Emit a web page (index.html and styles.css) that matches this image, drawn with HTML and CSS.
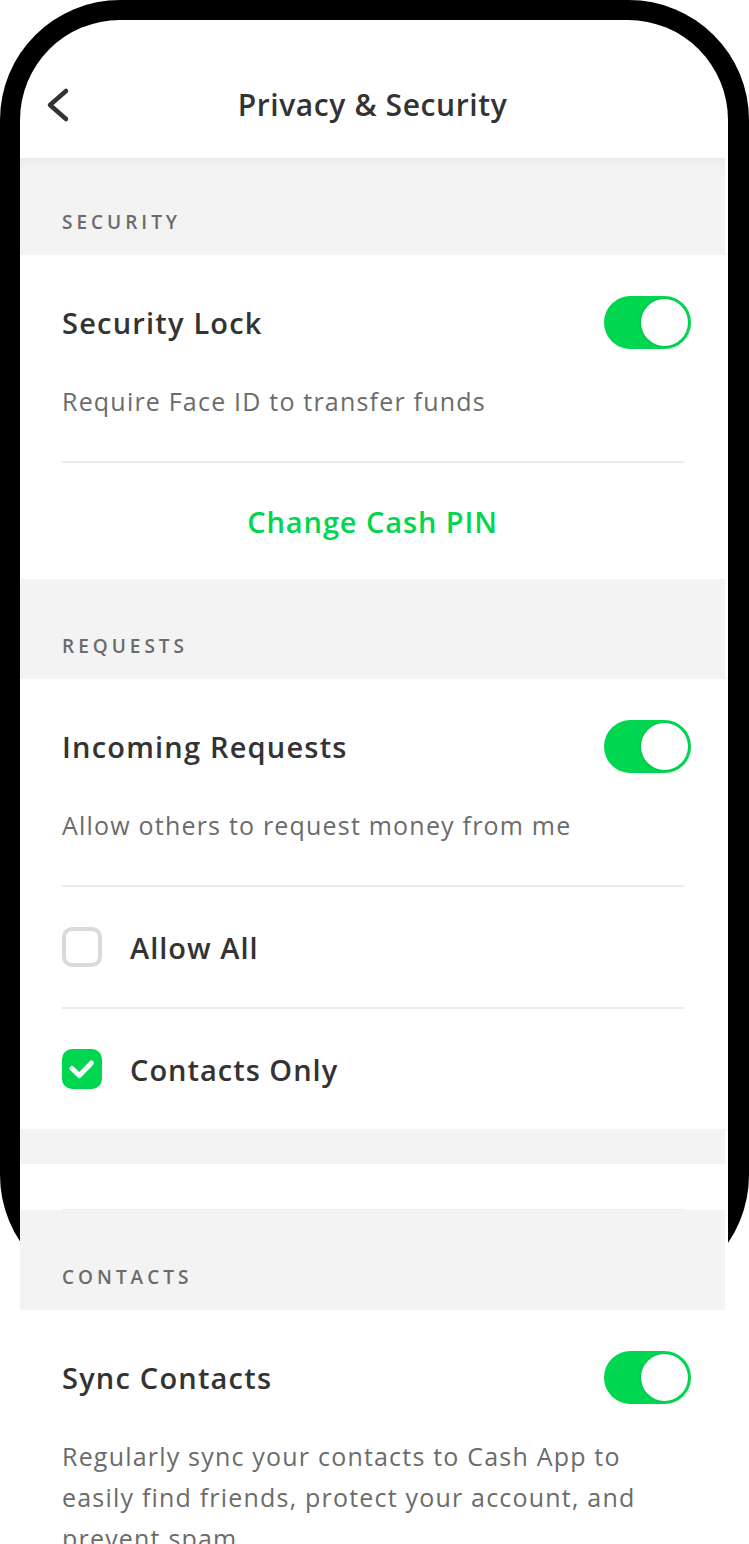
FILE: index.html
```html
<!DOCTYPE html>
<html lang="en">
<head>
<meta charset="utf-8">
<title>Privacy &amp; Security</title>
<link rel="stylesheet" href="styles.css">
</head>
<body>
<div class="device">
  <div class="screen">
    <header class="nav">
      <button class="back" aria-label="Back">
        <svg width="24" height="36" viewBox="0 0 24 36"><path d="M20 4 L4 18 L20 32" fill="none" stroke="#333" stroke-width="4.5" stroke-linecap="round" stroke-linejoin="round"/></svg>
      </button>
      <h1 class="nav-title">Privacy &amp; Security</h1>
      <span></span>
    </header>

    <div class="band band-first"><span class="band-label">SECURITY</span></div>
    <section class="group">
      <div class="setting">
        <div class="setting-head">
          <span class="setting-title">Security Lock</span>
          <span class="toggle"><span class="knob"></span></span>
        </div>
        <p class="setting-desc">Require Face ID to transfer funds</p>
      </div>
      <div class="divider"></div>
      <div class="link-row"><span class="link">Change Cash PIN</span></div>
    </section>

    <div class="band"><span class="band-label">REQUESTS</span></div>
    <section class="group">
      <div class="setting">
        <div class="setting-head">
          <span class="setting-title">Incoming Requests</span>
          <span class="toggle"><span class="knob"></span></span>
        </div>
        <p class="setting-desc">Allow others to request money from me</p>
      </div>
      <div class="divider"></div>
      <div class="check-row">
        <span class="checkbox"></span>
        <span class="check-label">Allow All</span>
      </div>
      <div class="divider"></div>
      <div class="check-row">
        <span class="checkbox checked">
          <svg width="40" height="40" viewBox="0 0 40 40"><path d="M10 19.5 L17.3 26.5 L29.5 14" fill="none" stroke="#fff" stroke-width="5" stroke-linecap="round" stroke-linejoin="round"/></svg>
        </span>
        <span class="check-label">Contacts Only</span>
      </div>
    </section>

    <div class="spacer-band"></div>
    <div class="gap-block"><div class="divider"></div></div>

    <div class="band"><span class="band-label">CONTACTS</span></div>
    <section class="group">
      <div class="setting">
        <div class="setting-head">
          <span class="setting-title">Sync Contacts</span>
          <span class="toggle"><span class="knob"></span></span>
        </div>
        <p class="setting-desc wrap">Regularly sync your contacts to Cash App to easily find friends, protect your account, and prevent spam</p>
      </div>
    </section>
  </div>
</div>
</body>
</html>
```

FILE: styles.css
```css
html, body {
  margin: 0;
  padding: 0;
  background: #ffffff;
}

body {
  font-family: "Open Sans", Lato, "Liberation Sans", sans-serif;
  color: #333333;
  width: 749px;
  height: 1544px;
  overflow: hidden;
}

.device {
  width: 749px;
  height: 1295px;
  box-sizing: border-box;
  background: #000000;
  border-radius: 120px;
  padding: 20px 21px 0 20px;
}

.screen {
  background: #ffffff;
  border-radius: 100px 100px 0 0;
  padding-right: 3px;
}

/* header */
.nav {
  height: 138px;
  box-sizing: border-box;
  padding: 56px 0 24px;
  display: grid;
  grid-template-columns: 1fr auto 1fr;
  align-items: center;
}

.back {
  justify-self: start;
  margin-left: 26px;
  padding: 0;
  border: 0;
  background: none;
  width: 24px;
  height: 36px;
  display: flex;
}

.nav-title {
  margin: 0;
  height: 58px;
  line-height: 58px;
  font-size: 30px;
  font-weight: 600;
  letter-spacing: 0.6px;
  color: #333333;
}

/* section label bands */
.band {
  height: 100px;
  box-sizing: border-box;
  background: #f3f3f3;
  display: flex;
  align-items: flex-end;
  padding: 0 0 23px 42px;
}

.band-first {
  height: 97px;
  background: linear-gradient(#ececec, #f3f3f3 12px);
}

.band-label {
  font-size: 19px;
  line-height: 20px;
  font-weight: 600;
  letter-spacing: 4px;
  color: #6b6b6b;
}

.group {
  background: #ffffff;
}

/* toggle settings */
.setting {
  padding: 41px 34px 0 42px;
}

.setting-head {
  height: 53px;
  display: flex;
  align-items: center;
  justify-content: space-between;
}

.setting-title {
  font-size: 29px;
  font-weight: 600;
  letter-spacing: 1.2px;
  color: #333333;
}

.toggle {
  width: 87px;
  height: 53px;
  box-sizing: border-box;
  border-radius: 27px;
  background: #00d64f;
  display: flex;
  align-items: center;
  justify-content: flex-end;
  padding: 3px;
}

.knob {
  width: 47px;
  height: 47px;
  border-radius: 50%;
  background: #ffffff;
  box-shadow: -1px 0 3px rgba(0, 0, 0, 0.10);
}

.setting-desc {
  margin: 32px 0 0;
  font-size: 25px;
  line-height: 41px;
  letter-spacing: 1.2px;
  color: #6b6b6b;
}

.setting-desc.wrap {
  max-width: 622px;
}

.divider {
  height: 2px;
  background: #ececec;
  margin: 39px 41px 0 42px;
}

.check-row + .divider {
  margin-top: 0;
}

/* link row */
.link-row {
  height: 116px;
  display: flex;
  align-items: center;
  justify-content: center;
}

.link {
  font-size: 29px;
  font-weight: 600;
  letter-spacing: 0.9px;
  color: #00d64f;
}

/* checkbox rows */
.check-row {
  height: 120px;
  display: flex;
  align-items: center;
  gap: 28px;
  padding-left: 42px;
}

.checkbox {
  width: 40px;
  height: 40px;
  box-sizing: border-box;
  border: 4px solid #dadada;
  border-radius: 10px;
  display: flex;
  align-items: center;
  justify-content: center;
}

.checkbox.checked {
  border: 0;
  background: #00d64f;
}

.check-label {
  font-size: 29px;
  font-weight: 600;
  letter-spacing: 1px;
  color: #333333;
}

/* odd spacer between groups */
.spacer-band {
  height: 35px;
  background: #f3f3f3;
}

.gap-block {
  height: 46px;
  display: flex;
  flex-direction: column;
  justify-content: flex-end;
}

.gap-block .divider {
  margin-top: 0;
  height: 1px;
}
```
